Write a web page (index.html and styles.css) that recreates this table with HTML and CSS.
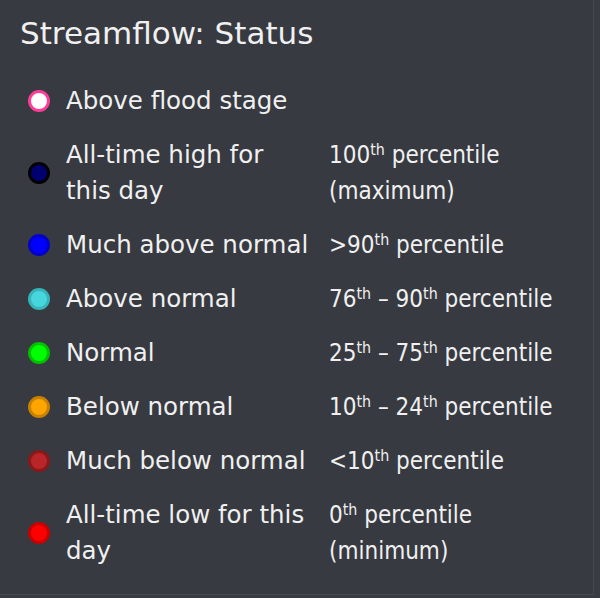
FILE: index.html
```html
<!DOCTYPE html>
<html>
<head>
<meta charset="utf-8">
<link rel="stylesheet" href="styles.css">
</head>
<body>
<div class="panel">
  <h2 class="title">Streamflow: Status</h2>
  <div class="legend">
    <span class="dot flood"></span><span class="label">Above flood stage</span><span class="range"></span>
    <span class="dot high"></span><span class="label">All-time high for this day</span><span class="range">100<sup>th</sup> percentile (maximum)</span>
    <span class="dot much-above"></span><span class="label">Much above normal</span><span class="range">&gt;90<sup>th</sup> percentile</span>
    <span class="dot above"></span><span class="label">Above normal</span><span class="range">76<sup>th</sup> – 90<sup>th</sup> percentile</span>
    <span class="dot normal"></span><span class="label">Normal</span><span class="range">25<sup>th</sup> – 75<sup>th</sup> percentile</span>
    <span class="dot below"></span><span class="label">Below normal</span><span class="range">10<sup>th</sup> – 24<sup>th</sup> percentile</span>
    <span class="dot much-below"></span><span class="label">Much below normal</span><span class="range">&lt;10<sup>th</sup> percentile</span>
    <span class="dot low"></span><span class="label">All-time low for this day</span><span class="range">0<sup>th</sup> percentile (minimum)</span>
  </div>
</div>
</body>
</html>
```
FILE: styles.css
```css
html, body {
  margin: 0;
  padding: 0;
  background: #393c42;
}
.panel {
  width: 594px;
  height: 595px;
  box-sizing: border-box;
  padding: 15px 0 0 20px;
  background: #373a40;
  border-right: 1px solid #454950;
  border-bottom: 1px solid #454950;
  color: #f0f0f0;
  font-family: "DejaVu Sans", Verdana, sans-serif;
}
.title {
  margin: 0 0 32px;
  font-size: 31px;
  font-weight: 400;
  line-height: 36px;
}
.legend {
  display: grid;
  grid-template-columns: 38px 246px 245px;
  column-gap: 8px;
  row-gap: 18px;
  align-items: baseline;
}
.dot {
  align-self: center;
  width: 16px;
  height: 16px;
  border-radius: 50%;
  border: 3px solid;
  margin-left: 8px;
}
.label {
  font-size: 24.5px;
  line-height: 36px;
}
.range {
  padding-left: 9px;
  font-family: "DejaVu Sans Condensed", "DejaVu Sans", sans-serif;
  font-size: 24px;
  line-height: 36px;
}
sup {
  font-size: 0.66em;
  line-height: 0;
  vertical-align: 0.5em;
}
.flood { background: #ffffff; border-color: #ff3d98; }
.high { background: #000070; border-color: #000000; }
.much-above { background: #0000ff; border-color: #0000c8; }
.above { background: #46d6dc; border-color: #36b4ba; }
.normal { background: #00ff00; border-color: #00c000; }
.below { background: #ffa500; border-color: #c88000; }
.much-below { background: #b8262a; border-color: #8a1818; }
.low { background: #ff0000; border-color: #c80000; }
```
